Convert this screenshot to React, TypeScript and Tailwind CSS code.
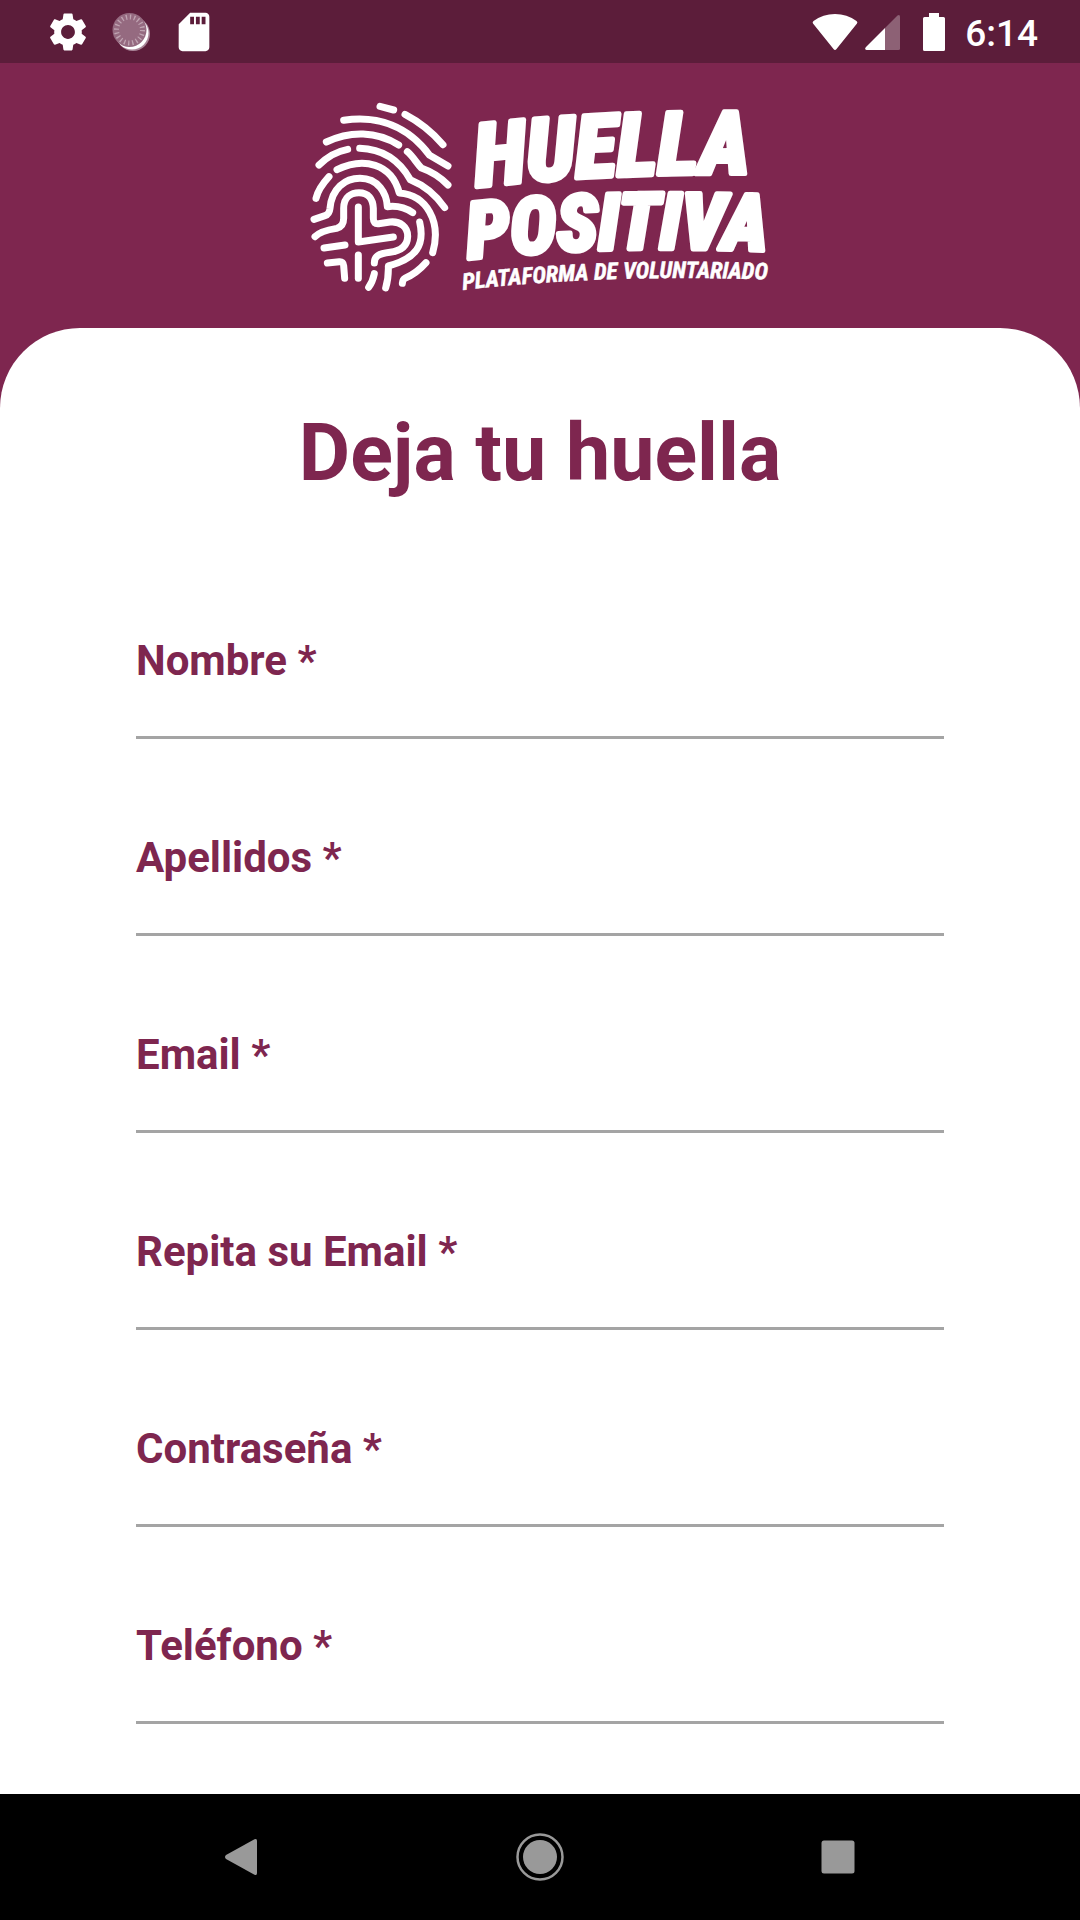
import { MdSdCard, MdSettings } from 'react-icons/md';

const fields = [
  { id: 'nombre', label: 'Nombre *', type: 'text' },
  { id: 'apellidos', label: 'Apellidos *', type: 'text' },
  { id: 'email', label: 'Email *', type: 'email' },
  { id: 'repita-email', label: 'Repita su Email *', type: 'email' },
  { id: 'contrasena', label: 'Contraseña *', type: 'password' },
  { id: 'telefono', label: 'Teléfono *', type: 'tel' },
];

const ridges = [
  'M240 34L281 45',
  'M315 58Q380 92 429 149',
  'M131 76C235 60 325 95 389 181L444 213',
  'M79 141C150 107 230 108 296 150',
  'M57 210Q95 172 143 163',
  'M179 160C250 162 300 200 331 254Q395 280 434 338',
  'M322 170C340 185 350 205 364 219Q410 235 444 270',
  'M111 224C190 185 275 205 298 294C380 300 425 380 398 473',
  'M87 245Q55 280 48 310',
  'M42 373L75 362Q88 358 90 340C95 280 135 250 180 250C235 250 260 295 262 335Q305 330 338 353',
  'M45 425Q60 408 110 400Q131 395 131 370V340C131 305 155 293 177 293C205 293 219 312 220 340V370Q220 388 236 386L270 381C300 378 324 395 323 425C322 455 300 468 270 472C235 476 223 484 223 504',
  'M175 336V441L280 426',
  'M72 459L135 450',
  'M175 480V550',
  'M82 504L118 500Q130 499 131 512L134 550',
  'M223 536Q218 560 206 577',
  'M359 381C375 450 350 490 265 513Q266 550 257 579',
  'M378 503Q350 535 315 550Q308 554 307 565',
];

function StatusBar() {
  return (
    <div className="flex h-[63px] shrink-0 items-center justify-between bg-[#5c1d3a] pr-[42px] pl-[45px] text-white">
      <div className="flex items-center gap-[17px]">
        <MdSettings size={46} aria-hidden="true" />
        <svg width="46" height="46" viewBox="0 0 46 46" aria-hidden="true">
          <circle cx="25" cy="25" r="17" fill="#a98497" />
          <circle cx="24" cy="24" r="16.5" fill="#fff" />
          <circle cx="21.5" cy="21" r="17" fill="#956a80" />
          <circle cx="21.5" cy="21" r="13" fill="none" stroke="#c0a4b2" strokeWidth="5" strokeDasharray="1.3 2.784" />
        </svg>
        <MdSdCard size={46} aria-hidden="true" />
      </div>
      <div className="flex items-center">
        <svg className="mr-[7px]" width="46" height="38" viewBox="0 0 46 38" fill="currentColor" aria-hidden="true">
          <path d="M1 10.500Q0 9 1.500 8Q11 1 23 1T44.500 8Q46 9 45 10.500L24.500 36Q23 38 21.500 36Z" />
        </svg>
        <svg className="mr-[23px]" width="35" height="38" viewBox="0 0 35 38" fill="currentColor" aria-hidden="true">
          <path d="M20 15L32.500 2.500Q35 1 35 4V35.500Q35 37 33.500 37H20Z" fillOpacity=".3" />
          <path d="M20 15V37H1.500Q-1 36.500 1 34Z" />
        </svg>
        <svg className="mr-5" width="22" height="38" viewBox="0 0 22 38" fill="currentColor" aria-hidden="true">
          <path d="M6 0H16V4H20.500Q22 4 22 5.500V36.500Q22 38 20.500 38H1.500Q0 38 0 36.500V5.500Q0 4 1.500 4H6Z" />
        </svg>
        <time className="pt-1 text-[37px] leading-none font-medium">6:14</time>
      </div>
    </div>
  );
}

function Logo() {
  return (
    <svg
      className="h-[205px] w-[480px] overflow-visible"
      viewBox="300 95 480 205"
      role="img"
      aria-label="Huella Positiva, plataforma de voluntariado"
    >
      <defs>
        <path id="arc-top" d="M477 187Q610 171 800 174" />
        <path id="arc-middle" d="M469 259Q600 243 800 252" />
        <path id="arc-bottom" d="M463 290Q620 272 800 281" />
      </defs>
      <g transform="translate(300 95) scale(0.333333)" fill="none" stroke="#fff" strokeWidth="21" strokeLinecap="round" strokeLinejoin="round">
        {ridges.map((d) => (
          <path key={d} d={d} />
        ))}
      </g>
      <g fill="#fff" stroke="#fff" strokeLinejoin="round" fontFamily="'Roboto Condensed', Roboto, sans-serif" fontWeight="800" fontStyle="italic">
        <text fontSize="87" strokeWidth="5">
          <textPath href="#arc-top">HUELLA</textPath>
        </text>
        <text fontSize="78" strokeWidth="5">
          <textPath href="#arc-middle">POSITIVA</textPath>
        </text>
        <text fontSize="23" strokeWidth="0.5" fontWeight="700">
          <textPath href="#arc-bottom">PLATAFORMA DE VOLUNTARIADO</textPath>
        </text>
      </g>
    </svg>
  );
}

function NavigationBar() {
  return (
    <nav className="flex h-[126px] shrink-0 justify-center bg-black text-[#999999]">
      <div className="grid w-full max-w-[894px] grid-cols-3 place-items-center">
        <button type="button" aria-label="Atrás">
          <svg width="48" height="48" viewBox="0 0 48 48" fill="currentColor">
            <path d="M8 22L36.500 6.300Q39 5 39 8V40Q39 43 36.500 41.700L8 26Q6 24 8 22Z" />
          </svg>
        </button>
        <button type="button" aria-label="Inicio">
          <svg width="48" height="48" viewBox="0 0 48 48">
            <circle cx="24" cy="24" r="22.500" fill="none" stroke="currentColor" strokeWidth="2.500" />
            <circle cx="24" cy="24" r="17" fill="currentColor" />
          </svg>
        </button>
        <button type="button" aria-label="Recientes">
          <svg width="48" height="48" viewBox="0 0 48 48" fill="currentColor">
            <rect x="7.500" y="7.500" width="33" height="33" rx="2.500" />
          </svg>
        </button>
      </div>
    </nav>
  );
}

export default function App() {
  return (
    <div className="flex min-h-screen flex-col bg-[#7e264f] font-['Roboto',sans-serif]">
      <StatusBar />
      <header className="flex justify-center pt-8 pb-7">
        <Logo />
      </header>
      <main className="grow rounded-t-[80px] bg-white px-[136px] pt-[77px] pb-[70px] text-[#7e264f]">
        <h1 className="text-center text-[79px] leading-[96px] font-bold">Deja tu huella</h1>
        <form className="mt-[136px] flex flex-col gap-[95px]">
          {fields.map((field) => (
            <div key={field.id} className="flex flex-col">
              <label htmlFor={field.id} className="text-[42px] leading-[48px] font-bold">
                {field.label}
              </label>
              <input
                id={field.id}
                type={field.type}
                className="h-[54px] w-full border-b-[3px] border-[#a4a4a4] bg-transparent text-[36px] outline-none"
              />
            </div>
          ))}
        </form>
      </main>
      <NavigationBar />
    </div>
  );
}
